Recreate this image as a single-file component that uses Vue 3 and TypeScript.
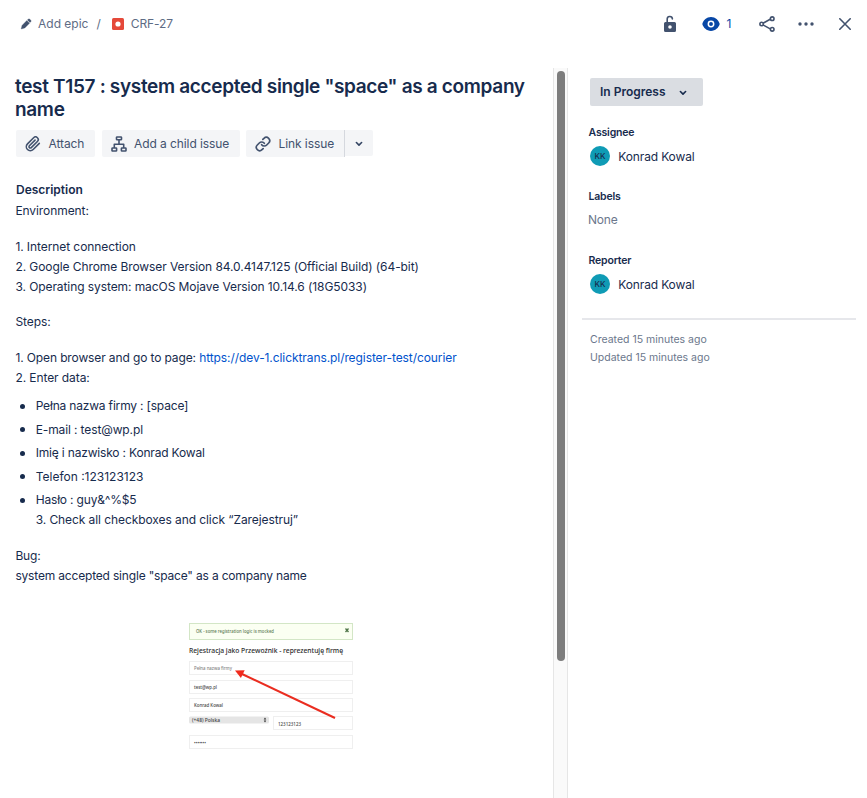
<script setup lang="ts">
interface Person { label: string; name: string }
interface Field { text: string; fit: string }
const assignee: Person = { label: 'Assignee', name: 'Konrad Kowal' }
const reporter: Person = { label: 'Reporter', name: 'Konrad Kowal' }
const url = 'https://dev-1.clicktrans.pl/register-test/courier'
const fields: Field[] = [
  { text: 'Pełna nazwa firmy : [space]', fit: 'tight' },
  { text: 'E-mail : test@wp.pl', fit: 'snug' },
  { text: 'Imię i nazwisko : Konrad Kowal', fit: 'tight' },
  { text: 'Telefon :123123123', fit: 'loose' },
]
</script>

<template>
  <div class="issue">
    <header class="topbar">
      <nav class="crumbs">
        <svg class="pencil" width="12" height="12" viewBox="0 0 12 12"><path d="M1.200 11l.8-3.600L6.800 2.600l2.700 2.700-4.700 4.700zM7.400 2l.8-.8q.8-.7 1.600 0l1 1q.7.800 0 1.600l-.8.800z" fill="#42526e" stroke="#42526e" stroke-width=".3" /></svg>
        <span class="epic">Add epic</span>
        <span class="slash">/</span>
        <svg class="bug" width="12" height="12" viewBox="0 0 12 12"><rect width="12" height="12" rx="1.500" fill="#e5493a" /><circle cx="6" cy="6" r="2.600" fill="#fff" /></svg>
        <span class="key">CRF-27</span>
      </nav>
      <div class="actions">
        <svg class="lock" width="14" height="18" viewBox="0 0 14 18"><path d="M4.200 8V4.300a2.600 2.600 0 0 1 5.200-.4" fill="none" stroke="#42526e" stroke-width="1.600" stroke-linecap="round" /><path fill-rule="evenodd" d="M2.500 7h9Q13 7 13 8.500v7q0 1.500-1.500 1.500h-9Q1 17 1 15.500v-7Q1 7 2.500 7zM7 10.200a1.800 1.800 0 1 0 0 3.600 1.800 1.800 0 0 0 0-3.600z" fill="#42526e" /></svg>
        <svg class="eye" width="18" height="14" viewBox="0 0 18 14"><path d="M9 0C4.500 0 1.500 3.500.5 6.200q-.3.800 0 1.600C1.500 10.500 4.500 14 9 14s7.500-3.500 8.500-6.200q.3-.8 0-1.600C16.500 3.500 13.500 0 9 0z" fill="#0747a6" /><circle cx="9" cy="7" r="2.700" fill="none" stroke="#fff" stroke-width="1.500" /></svg>
        <span class="watchers">1</span>
        <svg class="share" width="16" height="16" viewBox="0 0 16 16" fill="none" stroke="#42526e" stroke-width="1.600"><path d="M4 7.200l7.200-3.900M4 8.900l7.200 4" /><circle cx="2.600" cy="8" r="1.700" /><circle cx="13.200" cy="2.700" r="1.800" /><circle cx="13.200" cy="13.300" r="1.800" /></svg>
        <svg class="more" width="16" height="4" viewBox="0 0 16 4" fill="#42526e"><circle cx="2" cy="2" r="1.700" /><circle cx="8" cy="2" r="1.700" /><circle cx="14" cy="2" r="1.700" /></svg>
        <svg class="close" width="12" height="12" viewBox="0 0 12 12"><path d="M.8.800l10.400 10.400M11.200.800L.8 11.200" stroke="#42526e" stroke-width="1.600" stroke-linecap="round" /></svg>
      </div>
    </header>

    <div class="body">
      <main class="main">
        <h1>test T157 : system accepted single "space" as a company name</h1>
        <div class="toolbar">
          <button class="btn attach">
            <svg width="16" height="16" viewBox="0 0 24 24" fill="none" stroke="#42526e" stroke-width="2.400" stroke-linecap="round" stroke-linejoin="round"><path d="M21.440 11.050l-9.190 9.190a6 6 0 0 1-8.490-8.490l9.190-9.190a4 4 0 0 1 5.660 5.660l-9.200 9.190a2 2 0 0 1-2.830-2.830l8.490-8.480" /></svg>
            <span>Attach</span>
          </button>
          <button class="btn child">
            <svg width="16" height="16" viewBox="0 0 16 16" fill="none" stroke="#42526e" stroke-width="1.600" stroke-linejoin="round"><rect x="5.500" y="1" width="5" height="2.800" rx=".6" /><rect x="1" y="12" width="4.600" height="3" rx=".6" /><rect x="10.400" y="12" width="4.600" height="3" rx=".6" /><path d="M8 4v4.200M3.300 12V8.200h9.400V12" /></svg>
            <span>Add a child issue</span>
          </button>
          <div class="split">
            <button class="btn link">
              <svg width="16" height="16" viewBox="0 0 24 24" fill="none" stroke="#42526e" stroke-width="2.500" stroke-linecap="round" stroke-linejoin="round"><path d="M10 13a5 5 0 0 0 7.540.54l3-3a5 5 0 0 0-7.070-7.070l-1.720 1.710" /><path d="M14 11a5 5 0 0 0-7.540-.54l-3 3a5 5 0 0 0 7.070 7.070l1.710-1.710" /></svg>
              <span>Link issue</span>
            </button>
            <button class="btn caret">
              <svg width="8" height="6" viewBox="0 0 8 6"><path d="M1.400 1.500L4 4.100l2.600-2.600" fill="none" stroke="#344563" stroke-width="1.600" stroke-linecap="round" stroke-linejoin="round" /></svg>
            </button>
          </div>
        </div>

        <h2>Description</h2>
        <section class="desc">
          <p>Environment:</p>
          <p>1. Internet connection<br />2. Google Chrome Browser Version 84.0.4147.125 (Official Build) (64-bit)<br />3. Operating system: macOS Mojave Version 10.14.6 (18G5033)</p>
          <p class="steps">Steps:</p>
          <p><span class="snug">1. Open browser and go to page: </span><a>{{ url }}</a><br />2. Enter data:</p>
          <ul>
            <li v-for="f in fields" :key="f.text" :class="f.fit">{{ f.text }}</li>
            <li><span class="tight">Hasło : guy&amp;^%$5</span><br />3. Check all checkboxes and click “Zarejestruj”</li>
          </ul>
          <p class="tight">Bug:<br />system accepted single "space" as a company name</p>
        </section>

        <svg class="shot" width="166" height="130" viewBox="0 0 166 130">
          <rect x="1.500" y="1.500" width="163" height="16" fill="#fbfff2" stroke="#d3e6c6" />
          <g class="tiny">
            <text x="8" y="11.300" textLength="78" lengthAdjust="spacingAndGlyphs" class="ok">OK - some registration logic is mocked</text>
            <path d="M157.500 6.500l3 3.500M160.500 6.500l-3 3.500" stroke="#4f7548" stroke-width="1.300" />
            <text x="1" y="30.800" textLength="154" lengthAdjust="spacingAndGlyphs" class="heading">Rejestracja jako Przewoźnik - reprezentuję firmę</text>
          </g>
          <g fill="#fff" stroke="#efefef">
            <rect x="1.500" y="39.500" width="163" height="13" />
            <rect x="1.500" y="58.500" width="163" height="13" />
            <rect x="1.500" y="76.500" width="163" height="13" />
            <rect x="85.500" y="94.500" width="79" height="13" />
            <rect x="1.500" y="113.500" width="163" height="13" />
          </g>
          <rect x="1" y="94.500" width="80" height="7" rx="1.500" fill="#e5e5e5" />
          <g class="tiny">
            <text x="6" y="47.700" textLength="38" lengthAdjust="spacingAndGlyphs" class="hint">Pełna nazwa firmy</text>
            <text x="6" y="66.500" textLength="23" lengthAdjust="spacingAndGlyphs">test@wp.pl</text>
            <text x="6" y="85" textLength="29" lengthAdjust="spacingAndGlyphs">Konrad Kowal</text>
            <text x="4" y="100" textLength="28" lengthAdjust="spacingAndGlyphs">(+48) Polska</text>
            <text x="90" y="103.500" textLength="23" lengthAdjust="spacingAndGlyphs">123123123</text>
            <text x="6" y="122.500" textLength="12" lengthAdjust="spacingAndGlyphs">•••••••</text>
          </g>
          <path d="M77 95.500l-1.300 2h2.600zM77 100.500l-1.300-2h2.600z" fill="#333" />
          <path d="M54 52L147 96" stroke="#ea2d20" stroke-width="2" />
          <path d="M47 48.500l9.700-.2-3.800 7.700z" fill="#f02a1d" />
        </svg>
      </main>

      <div class="track"><div class="thumb"></div></div>

      <aside class="side">
        <button class="status"><span>In Progress</span>
          <svg width="8" height="6" viewBox="0 0 8 6"><path d="M1.400 1.500L4 4.100l2.600-2.600" fill="none" stroke="#172b4d" stroke-width="1.600" stroke-linecap="round" stroke-linejoin="round" /></svg>
        </button>
        <h3>{{ assignee.label }}</h3>
        <div class="person"><span class="avatar">KK</span><span class="name">{{ assignee.name }}</span></div>
        <h3>Labels</h3>
        <div class="none">None</div>
        <h3>{{ reporter.label }}</h3>
        <div class="person"><span class="avatar">KK</span><span class="name">{{ reporter.name }}</span></div>
        <div class="dates"><div>Created 15 minutes ago</div><div>Updated 15 minutes ago</div></div>
      </aside>
    </div>
  </div>
</template>

<style>
body { margin: 0; background: #fff; overflow: hidden; }
</style>

<style scoped>
.issue { width: 867px; height: 798px; box-sizing: border-box; overflow: hidden; background: #fff; color: #172b4d; font-family: Inter, "Liberation Sans", sans-serif; font-size: 12px; display: flex; flex-direction: column; }
svg { display: block; flex: none; }
h1, h2, h3, p, ul { margin: 0; padding: 0; font-weight: inherit; }
button { border: 0; margin: 0; padding: 0; font: inherit; letter-spacing: inherit; color: inherit; background: none; display: flex; align-items: center; }
.topbar { height: 68px; flex: none; display: flex; justify-content: space-between; align-items: flex-start; }
.crumbs { display: flex; align-items: center; height: 20px; margin: 14px 0 0 20px; color: #5e6c84; line-height: 16px; }
.crumbs span { padding-bottom: 1px; }
.epic { margin-left: 6px; }
.slash { margin: 0 11px 0 8px; }
.key { margin-left: 7px; letter-spacing: -.1px; }
.actions { display: flex; align-items: center; height: 20px; margin: 14px 16px 0 0; line-height: 16px; }
.lock { margin-right: 25px; }
.eye { margin-bottom: 1px; }
.watchers { color: #0747a6; margin-left: 6.500px; width: 7.500px; padding-bottom: 1px; }
.share { margin-left: 25px; }
.more { margin: 0 25px 1px 23px; }
.close { margin-bottom: 1px; }
.body { flex: 1; display: flex; min-height: 0; }
.main { width: 553px; flex: none; box-sizing: border-box; padding: 7px 15px 0; }
h1 { font-size: 19px; line-height: 23px; font-weight: 600; letter-spacing: -.33px; }
.toolbar { display: flex; margin: 9px 0 0 1px; gap: 7px; color: #42526e; align-items: flex-start; letter-spacing: -.08px; }
.btn { height: 27px; background: #f4f5f7; border-radius: 2px; }
.attach { width: 79px; padding-left: 9px; box-sizing: border-box; gap: 7.500px; }
.child { width: 138px; padding-left: 9px; box-sizing: border-box; gap: 7px; }
.split { display: flex; margin-left: -1px; align-items: flex-start; }
.link { width: 99px; padding-left: 9px; box-sizing: border-box; gap: 7.500px; border-right: 1px solid #d5d8de; border-radius: 2px 0 0 2px; }
.caret { width: 28px; height: 26px; justify-content: center; border-radius: 0 2px 2px 0; padding-top: 1px; box-sizing: border-box; }
h2 { font-size: 12px; line-height: 20px; font-weight: 600; margin: 23px 0 1px 1px; }
.desc { line-height: 20px; display: flex; flex-direction: column; letter-spacing: -.08px; padding-left: .4px; }
.desc p { margin-bottom: 16px; white-space: nowrap; }
.desc p:nth-of-type(2) { margin-bottom: 15px; }
.desc a { color: #0052cc; }
.desc .snug { letter-spacing: -.12px; }
.desc .tight { letter-spacing: -.18px; }
.desc .loose { letter-spacing: 0; }
.desc ul { margin: -8px 0 16px; list-style: none; display: flex; flex-direction: column; gap: 3.500px; }
.desc li { padding-left: 20.300px; position: relative; }
.desc li::before { content: ""; position: absolute; left: 5px; top: 7.500px; width: 5px; height: 5px; border-radius: 50%; background: #172b4d; }
.shot { margin: 20px 0 0 173px; }
.tiny { font-family: "Noto Sans", sans-serif; font-size: 4.800px; font-weight: 500; fill: #444; }
.ok { fill: #5c7a52; }
.hint { fill: #858585; }
.heading { font-size: 7px; fill: #2b2b2b; }
.track { width: 15px; flex: none; box-sizing: border-box; background: #fafafa; border: solid #e6e6e6; border-width: 0 1px; padding: 3px 3px 0; }
.thumb { width: 8px; height: 590px; border-radius: 4px; background: #7d7d7d; }
.side { flex: 1; padding: 10px 11px 0 14px; }
.status { width: 113px; height: 28px; box-sizing: border-box; margin-left: 8px; padding: 0 16px 0 10px; justify-content: space-between; background: #dadde2; border-radius: 2px; font-weight: 600; }
.status span { padding-bottom: 1px; }
.status svg { margin-top: 1px; }
h3 { font-size: 10.500px; line-height: 14px; font-weight: 600; margin-left: 6.500px; letter-spacing: -.18px; }
.status + h3 { margin-top: 20px; }
.person { display: flex; align-items: center; height: 20px; margin: 6px 0 24px 8px; gap: 8.300px; }
.name { letter-spacing: -.14px; }
.avatar { width: 20px; height: 20px; border-radius: 50%; background: #0f9bb5; display: flex; align-items: center; justify-content: center; font-size: 8px; font-weight: 500; }
.none { color: #6b778c; line-height: 20px; margin: 6px 0 24px 6px; letter-spacing: -.2px; }
.dates { border-top: 2px solid #e6e7eb; padding: 11px 0 0 8px; color: #6b778c; font-size: 10.500px; line-height: 18px; }
</style>
